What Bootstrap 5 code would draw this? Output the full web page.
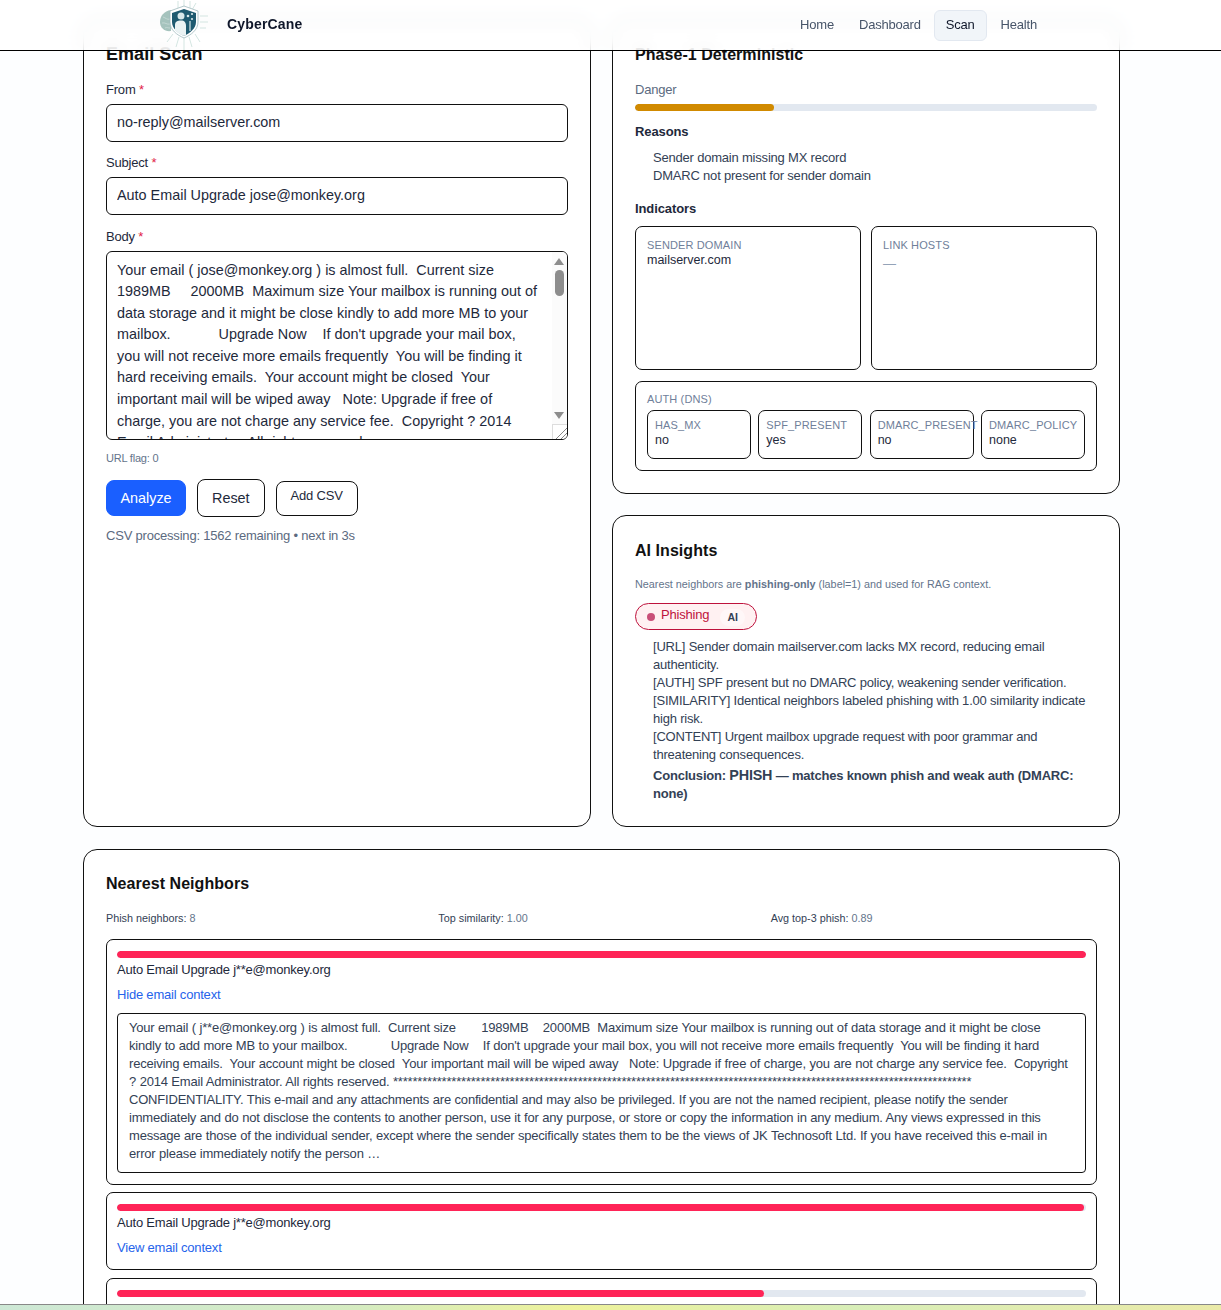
<!DOCTYPE html>
<html lang="en">
<head>
    <meta charset="UTF-8" />
    <title>CyberCane - Scan</title>
    <meta name="viewport" content="width=device-width, initial-scale=1" />
    <link href="https://cdn.jsdelivr.net/npm/bootstrap@5.3.0/dist/css/bootstrap.min.css" rel="stylesheet" />
    <style>
        html, body { height: 1310px; overflow: hidden; }
        body { font-family: "Liberation Sans", Arial, sans-serif; font-size: 13px; letter-spacing: -.2px; color: #0f172a; background: #fdfeff; padding-top: 20px; }
        .top-bar { height: 51px; background: rgba(255,255,255,.78); backdrop-filter: blur(8px); border-bottom: 1px solid #000; padding: 0; }
        .top-inner { width: 1037px; margin-left: 83px; height: 50px; }
        .logo-svg { width: 50px; height: 50px; margin-left: 76px; filter: blur(.35px); }
        .brand-name { margin-left: 18px; margin-top: -2px; font-size: 14px; font-weight: 700; letter-spacing: .17px; color: #0f172a; }
        .top-links { gap: 1px; margin-right: 71px; }
        .top-link { color: #475569; padding: 5px 11px 7px; border: 1px solid transparent; border-radius: 6px; line-height: 17px; text-decoration: none; }
        .top-link.on { color: #0f172a; background: #f1f5f9; border-color: #e2e8f0; margin-right: 1px; }
        .page-wrap { width: 1037px; margin-left: 83px; }
        .two-cols { display: grid; grid-template-columns: 508px 508px; gap: 21px; }
        .right-col { gap: 21px; }
        .panel { background: #fff; border: 1px solid #111; border-radius: 14px; padding: 22px; }
        .panel-title { font-size: 16px; font-weight: 700; color: #111; margin: 0; line-height: 24px; letter-spacing: .05px; }
        .panel-title-big { font-size: 18px; margin-top: -1px; }
        .field-first { margin-top: 16px; }
        .field-second { margin-top: 13px; }
        .field-third { margin-top: 14px; }
        .field-label { display: block; color: #1e293b; margin-bottom: 7px; line-height: 15px; }
        .req { color: #e11d48; }
        .field-box { display: block; width: 100%; height: 38px; border: 1px solid #111; border-radius: 6px; padding: 0 10px 2px; font-size: 14.4px; letter-spacing: 0; color: #1e293b; background: #fff; font-family: inherit; outline: 0; }
        .body-box { height: 189px; padding: 0; overflow: hidden; position: relative; line-height: 21.6px; }
        .body-text { padding: 0 25px 0 10px; margin-top: 7.5px; white-space: pre-wrap; }
        .scroll-rail { position: absolute; right: 0; top: 0; bottom: 0; width: 15px; background: #fbfbfb; }
        .scroll-thumb { position: absolute; left: 3px; top: 18px; width: 9px; height: 26px; border-radius: 5px; background: #8d8d8d; }
        .scroll-up, .scroll-down { position: absolute; left: 2px; width: 0; height: 0; border-left: 5px solid transparent; border-right: 5px solid transparent; }
        .scroll-up { top: 6px; border-bottom: 7px solid #8d8d8d; }
        .scroll-down { bottom: 20px; border-top: 7px solid #8d8d8d; }
        .resize-grip { position: absolute; right: 0; bottom: 0; width: 15px; height: 15px; border: 1px solid #ddd; border-right: 0; border-bottom: 0; background: linear-gradient(135deg, #fff 58%, #888 58%, #888 64%, #fff 64%, #fff 76%, #888 76%, #888 82%, #fff 82%); }
        .tiny-note { font-size: 11px; color: #64748b; line-height: 12px; margin-top: 12px; }
        .act-row { gap: 11px; margin-top: 15px; }
        .act-btn { height: 38px; border-radius: 8px; font-size: 14.4px; letter-spacing: 0; line-height: 1; padding: 0 14px; background: #fff; border: 1px solid #111; color: #1e293b; display: inline-flex; align-items: center; }
        .act-primary { height: 36px; width: 80px; justify-content: center; padding: 0; background: #1a5fff; border-color: #1a5fff; color: #fff; font-weight: 500; }
        .act-csv { height: 35px; padding: 0 14px 5px; font-size: 13px; letter-spacing: -.2px; }
        .muted-line { color: #5b6a80; line-height: 17px; }
        .csv-line { margin-top: 10px; }
        .danger-line { margin-top: 15px; line-height: 15px; }
        .danger-rail { height: 7px; background: #e2e8f0; border-radius: 4px; overflow: hidden; margin-top: 7px; }
        .danger-fill { height: 100%; background: #d18a00; border-radius: 4px; }
        .sect-head { font-weight: 700; color: #1e293b; line-height: 15px; letter-spacing: -.1px; }
        .reason-head { margin-top: 13px; }
        .indicator-head { margin-top: 16px; }
        .reason-list { list-style: none; padding-left: 18px; margin: 10px 0 0; line-height: 18px; color: #334155; }
        .ind-pair { column-gap: 10px; margin-top: 10px; }
        .ind-box { border: 1px solid #111; border-radius: 7px; padding: 11px; line-height: 14px; }
        .ind-tall { height: 144px; }
        .auth-box { margin-top: 11px; padding-top: 10px; }
        .ind-label { font-size: 11px; letter-spacing: .12px; color: #70809a; line-height: 14px; }
        .ind-val { font-size: 12.5px; letter-spacing: 0; color: #1e293b; line-height: 15px; margin-top: 1px; }
        .ind-dash { color: #94a3b8; font-size: 13px; line-height: 24px; }
        .auth-grid { display: grid; grid-template-columns: repeat(4, minmax(0, 1fr)); gap: 7.33px; margin-top: 4px; }
        .auth-cell { border: 1px solid #111; border-radius: 7px; padding: 7px; height: 49px; white-space: nowrap; }
        .ai-title { margin-top: 1px; }
        .tiny-muted { font-size: 10.8px; letter-spacing: 0; color: #64748b; line-height: 14px; margin-top: 14px; }
        .verdict-pill { display: inline-flex; align-items: center; height: 27px; width: 122px; border: 1px solid #be123c; border-radius: 14px; background: #fff1f2; color: #be123c; padding: 0 0 4px 11px; margin-top: 12px; vertical-align: top; }
        .verdict-dot { width: 8px; height: 8px; border-radius: 50%; background: #c94f78; margin: 4px 6px 0 0; }
        .verdict-ai { font-size: 10.5px; font-weight: 700; letter-spacing: 0; color: #334155; background: #fff7f8; border-radius: 9px; width: 25px; line-height: 17px; text-align: center; margin-left: 11px; margin-top: 5px; }
        .insight-list { list-style: none; padding-left: 18px; margin: 8px 0 1px; line-height: 18px; color: #334155; }
        .insight-end { font-weight: 700; margin-top: 2px; }
        .insight-end strong { font-size: 14.4px; }
        .stat-grid { display: grid; grid-template-columns: repeat(3, 1fr); gap: 6px; margin-top: 16px; }
        .stat-txt { font-size: 10.8px; letter-spacing: 0; line-height: 13px; color: #334155; }
        .stat-txt span { color: #64748b; }
        .hit-box { border: 1px solid #111; border-radius: 7px; padding: 11px 10px; margin-bottom: 8px; }
        .hit-first { margin-top: 14px; margin-bottom: 7px; }
        .hit-bar { height: 7px; background: #e2e8f0; border-radius: 4px; overflow: hidden; }
        .hit-fill { height: 100%; background: #ff2457; border-radius: 4px; }
        .hit-subject { color: #1e293b; line-height: 15px; margin-top: 4px; }
        .hit-link { display: block; color: #2563eb; text-decoration: none; line-height: 15px; margin: 10px 0 3px; }
        .hit-context { border: 1px solid #111; border-radius: 4px; padding: 5px 12px 9px 11px; line-height: 18px; color: #334155; margin-top: 11px; white-space: pre-wrap; word-spacing: .2px; }
        .neighbor-panel { margin-top: 22px; }
        .bottom-strip { height: 6px; background: linear-gradient(90deg, #cde8d6, #d6ecc0 30%, #eef29a 47%, #d8eeb8 70%, #eaeaa8 100%); border-top: 1px solid #888; }
    </style>
</head>
<body>

<nav class="top-bar fixed-top">
    <div class="top-inner d-flex align-items-center justify-content-between">
        <div class="d-flex align-items-center">
            <svg class="logo-svg" viewBox="0 0 50 50">
                <g stroke="#d3e5e1" stroke-width="1" fill="none">
                    <path d="M25 0V8M19 1V9M31 1V9M37 3L33 10M41 16H49M41 22H49M41 28H47M25 38V50M20 37L17 47M30 37L33 47M14 34L8 42M36 34L41 42" />
                </g>
                <path d="M12 10C5 11 1 16 1 22C1 28 6 32 12 31Z" fill="#a5c3bd" />
                <path d="M4 17C7 18 8 20 11 19M3 23C6 22 8 25 11 24M6 28C8 27 9 28 11 28" stroke="#c9dcd8" stroke-width=".8" fill="none" />
                <path d="M25 6L39 11V22C39 30 32 35 25 38C18 35 11 30 11 22V11Z" fill="#fff" stroke="#9fb9bd" stroke-width=".8" />
                <path d="M25 9L37 13V22C37 28.500 31 33 25 36C19 33 13 28.500 13 22V13Z" fill="#1f5a70" />
                <circle cx="22" cy="16" r="3.500" fill="#d9e8ea" />
                <path d="M16 30V25C16 21.500 18.500 20.500 22 20.500C25.500 20.500 27 22.500 27 26V35L25 36C21.500 35 18.500 33 16 30Z" fill="#eaf2f3" />
                <path d="M31 21V31" stroke="#d9e8ea" stroke-width="1.200" />
                <circle cx="29" cy="16" r="1.300" fill="#d9e8ea" /><circle cx="33" cy="14" r="1.100" fill="#d9e8ea" /><circle cx="33" cy="19" r="1.100" fill="#d9e8ea" />
            </svg>
            <span class="brand-name">CyberCane</span>
        </div>
        <div class="top-links d-flex align-items-center">
            <a class="top-link" href="#">Home</a>
            <a class="top-link" href="#">Dashboard</a>
            <a class="top-link on" href="#">Scan</a>
            <a class="top-link" href="#">Health</a>
        </div>
    </div>
</nav>

<div class="page-wrap">
    <div class="two-cols">
        <div class="panel">
            <h2 class="panel-title panel-title-big">Email Scan</h2>
            <div class="field-first">
                <label class="field-label">From <span class="req">*</span></label>
                <input class="field-box" value="no-reply@mailserver.com" />
            </div>
            <div class="field-second">
                <label class="field-label">Subject <span class="req">*</span></label>
                <input class="field-box" value="Auto Email Upgrade jose@monkey.org" />
            </div>
            <div class="field-third">
                <label class="field-label">Body <span class="req">*</span></label>
                <div class="field-box body-box">
                    <div class="body-text">Your email ( jose@monkey.org ) is almost full.  Current size     1989MB     2000MB  Maximum size Your mailbox is running out of data storage and it might be close kindly to add more MB to your mailbox.            Upgrade Now    If don't upgrade your mail box, you will not receive more emails frequently  You will be finding it hard receiving emails.  Your account might be closed  Your important mail will be wiped away   Note: Upgrade if free of charge, you are not charge any service fee.  Copyright ? 2014 Email Administrator. All rights reserved.</div>
                    <div class="scroll-rail">
                        <span class="scroll-up"></span><span class="scroll-thumb"></span><span class="scroll-down"></span><span class="resize-grip"></span>
                    </div>
                </div>
            </div>
            <div class="tiny-note">URL flag: 0</div>
            <div class="act-row d-flex align-items-center">
                <button class="act-btn act-primary">Analyze</button>
                <button class="act-btn">Reset</button>
                <button class="act-btn act-csv">Add CSV</button>
            </div>
            <div class="muted-line csv-line">CSV processing: 1562 remaining • next in 3s</div>
        </div>

        <div class="right-col d-flex flex-column">
            <div class="panel">
                <h2 class="panel-title">Phase-1 Deterministic</h2>
                <div class="muted-line danger-line">Danger</div>
                <div class="danger-rail"><div class="danger-fill" style="width:30%"></div></div>
                <div class="sect-head reason-head">Reasons</div>
                <ul class="reason-list">
                    <li>Sender domain missing MX record</li>
                    <li>DMARC not present for sender domain</li>
                </ul>
                <div class="sect-head indicator-head">Indicators</div>
                <div class="row g-0 ind-pair">
                    <div class="col"><div class="ind-box ind-tall"><div class="ind-label">SENDER DOMAIN</div><div class="ind-val">mailserver.com</div></div></div>
                    <div class="col"><div class="ind-box ind-tall"><div class="ind-label">LINK HOSTS</div><div class="ind-dash">—</div></div></div>
                </div>
                <div class="ind-box auth-box">
                    <div class="ind-label">AUTH (DNS)</div>
                    <div class="auth-grid">
                        <div class="auth-cell"><div class="ind-label">HAS_MX</div><div class="ind-val">no</div></div>
                        <div class="auth-cell"><div class="ind-label">SPF_PRESENT</div><div class="ind-val">yes</div></div>
                        <div class="auth-cell"><div class="ind-label">DMARC_PRESENT</div><div class="ind-val">no</div></div>
                        <div class="auth-cell"><div class="ind-label">DMARC_POLICY</div><div class="ind-val">none</div></div>
                    </div>
                </div>
            </div>
            <div class="panel flex-grow-1">
                <h2 class="panel-title ai-title">AI Insights</h2>
                <div class="tiny-muted">Nearest neighbors are <strong>phishing-only</strong> (label=1) and used for RAG context.</div>
                <div class="verdict-pill"><span class="verdict-dot"></span>Phishing<span class="verdict-ai">AI</span></div>
                <ul class="insight-list">
                    <li>[URL] Sender domain mailserver.com lacks MX record, reducing email authenticity.</li>
                    <li>[AUTH] SPF present but no DMARC policy, weakening sender verification.</li>
                    <li>[SIMILARITY] Identical neighbors labeled phishing with 1.00 similarity indicate high risk.</li>
                    <li>[CONTENT] Urgent mailbox upgrade request with poor grammar and threatening consequences.</li>
                    <li class="insight-end">Conclusion: <strong>PHISH</strong> — matches known phish and weak auth (DMARC: none)</li>
                </ul>
            </div>
        </div>
    </div>

    <div class="panel neighbor-panel">
        <h2 class="panel-title">Nearest Neighbors</h2>
        <div class="stat-grid">
            <div class="stat-txt">Phish neighbors: <span>8</span></div>
            <div class="stat-txt">Top similarity: <span>1.00</span></div>
            <div class="stat-txt">Avg top-3 phish: <span>0.89</span></div>
        </div>
        <div class="hit-box hit-first">
            <div class="hit-bar"><div class="hit-fill" style="width:100%"></div></div>
            <div class="hit-subject">Auto Email Upgrade j**e@monkey.org</div>
            <a class="hit-link" href="#">Hide email context</a>
            <div class="hit-context">Your email ( j**e@monkey.org ) is almost full.  Current size       1989MB    2000MB  Maximum size Your mailbox is running out of data storage and it might be close kindly to add more MB to your mailbox.            Upgrade Now    If don't upgrade your mail box, you will not receive more emails frequently  You will be finding it hard receiving emails.  Your account might be closed  Your important mail will be wiped away   Note: Upgrade if free of charge, you are not charge any service fee.  Copyright ? 2014 Email Administrator. All rights reserved. *********************************************************************************************************************** CONFIDENTIALITY. This e-mail and any attachments are confidential and may also be privileged. If you are not the named recipient, please notify the sender immediately and do not disclose the contents to another person, use it for any purpose, or store or copy the information in any medium. Any views expressed in this message are those of the individual sender, except where the sender specifically states them to be the views of JK Technosoft Ltd. If you have received this e-mail in error please immediately notify the person …</div>
        </div>
        <div class="hit-box">
            <div class="hit-bar"><div class="hit-fill" style="width:99.8%"></div></div>
            <div class="hit-subject">Auto Email Upgrade j**e@monkey.org</div>
            <a class="hit-link" href="#">View email context</a>
        </div>
        <div class="hit-box">
            <div class="hit-bar"><div class="hit-fill" style="width:66.8%"></div></div>
            <div class="hit-subject">Upgrade j**e@monkey.org To Receive Mail</div>
        </div>
    </div>
</div>

<div class="bottom-strip fixed-bottom"></div>

</body>
</html>
